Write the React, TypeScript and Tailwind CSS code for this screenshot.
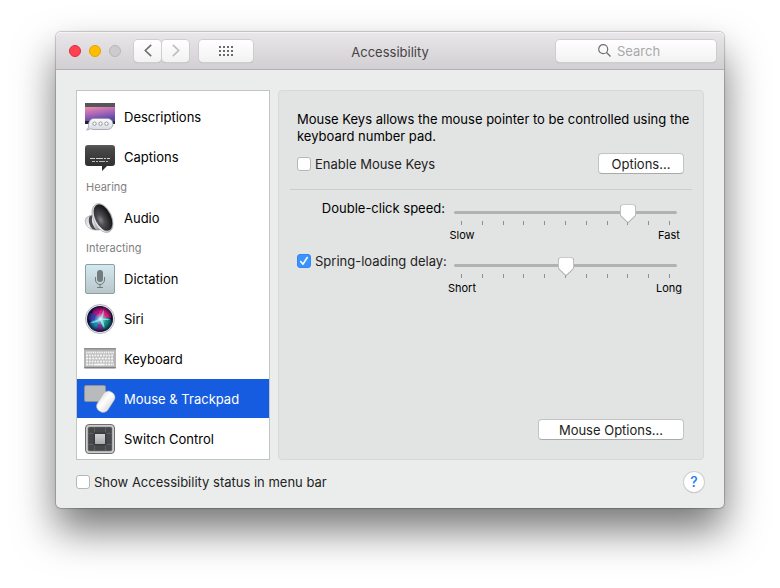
import React, { useState } from 'react';

function DescriptionsIcon() {
  return (
    <svg viewBox="0 0 32 32" className="size-8">
      <defs>
        <linearGradient id="desc-bg" x1="0" y1="0" x2="0.35" y2="1">
          <stop offset="0" stopColor="#f28ea6" />
          <stop offset="0.5" stopColor="#b068b8" />
          <stop offset="1" stopColor="#5a4aa8" />
        </linearGradient>
        <linearGradient id="desc-bubble" x1="0" y1="0" x2="0" y2="1">
          <stop offset="0" stopColor="#fbfbfd" />
          <stop offset="1" stopColor="#d9dae2" />
        </linearGradient>
      </defs>
      <rect x="1" y="2" width="30" height="21" fill="#232327" />
      <rect x="1" y="2" width="30" height="4" fill="#55565a" />
      <rect x="1" y="6" width="30" height="14" fill="url(#desc-bg)" />
      <path
        d="M10 17.500h13.500a5.500 5.500 0 0 1 0 11H10c-1.500 0-2.500-.2-3.500-.8-1 .8-2.500 1.200-4 1.200 1.500-1 2.200-2.300 2-4.300C4.200 21 6.500 17.500 10 17.500z"
        fill="url(#desc-bubble)"
        stroke="#8f90a0"
        strokeWidth="0.7"
      />
      <g fill="#fff" stroke="#8d8e98" strokeWidth="0.9">
        <circle cx="10.500" cy="22.700" r="1.700" />
        <circle cx="16.500" cy="22.700" r="1.700" />
        <circle cx="22.500" cy="22.700" r="1.700" />
      </g>
    </svg>
  );
}

function CaptionsIcon() {
  return (
    <svg viewBox="0 0 32 32" className="size-8">
      <defs>
        <linearGradient id="cap-bg" x1="0" y1="0" x2="0" y2="1">
          <stop offset="0" stopColor="#5a5a5a" />
          <stop offset="0.15" stopColor="#484848" />
          <stop offset="1" stopColor="#282828" />
        </linearGradient>
      </defs>
      <path
        d="M4 4h24a3 3 0 0 1 3 3v15a3 3 0 0 1-3 3h-5l-5 5v-5H4a3 3 0 0 1-3-3V7a3 3 0 0 1 3-3z"
        fill="url(#cap-bg)"
      />
      <path d="M6 17.500h20" stroke="#d0d0d0" strokeDasharray="5 1 7 1 2 1" />
      <path d="M8 20.500h16" stroke="#b8b8b8" strokeDasharray="3 1 2 1 6 1" />
    </svg>
  );
}

function AudioIcon() {
  return (
    <svg viewBox="0 0 32 32" className="size-8">
      <defs>
        <linearGradient id="aud-rim" x1="0" y1="0" x2="1" y2="1">
          <stop offset="0" stopColor="#c4c4c8" />
          <stop offset="0.5" stopColor="#f0f0f2" />
          <stop offset="1" stopColor="#8a8a90" />
        </linearGradient>
        <radialGradient id="aud-cone" cx="0.3" cy="0.55" r="0.6">
          <stop offset="0" stopColor="#85858a" />
          <stop offset="0.35" stopColor="#4c4c50" />
          <stop offset="1" stopColor="#1b1b1e" />
        </radialGradient>
      </defs>
      <path d="M2 16c2-2 5-2.500 8-4l6 16c-4 0-8 .5-11.500-2.500C1.500 23 .5 19 2 16z" fill="url(#aud-rim)" stroke="#88888e" strokeWidth="0.5" />
      <path d="M5.500 14.500c-1.500 4-.5 9 3 12.500l4 1C8.500 24 7 18 8.500 13z" fill="#4a4a50" />
      <ellipse cx="18.500" cy="16" rx="9.200" ry="15.500" transform="rotate(-25 18.500 16)" fill="url(#aud-rim)" stroke="#98989c" strokeWidth="0.5" />
      <ellipse cx="19" cy="15.500" rx="7.900" ry="14.200" transform="rotate(-25 19 15.500)" fill="url(#aud-cone)" />
    </svg>
  );
}

function DictationIcon() {
  return (
    <svg viewBox="0 0 32 32" className="size-8">
      <defs>
        <linearGradient id="dict-bg" x1="0" y1="0" x2="0" y2="1">
          <stop offset="0" stopColor="#d2eaf0" />
          <stop offset="1" stopColor="#b9c5c8" />
        </linearGradient>
      </defs>
      <rect x="1.500" y="1.500" width="29" height="29" rx="1.500" fill="url(#dict-bg)" stroke="#8fa0a5" />
      <rect x="13" y="7" width="6" height="12" rx="3" fill="#727b7e" />
      <path d="M11.500 14v3a4.500 4.500 0 0 0 9 0v-3M16 21.500V24M13 24.500h6" fill="none" stroke="#727b7e" />
    </svg>
  );
}

function SiriIcon() {
  return (
    <svg viewBox="0 0 32 32" className="size-8">
      <defs>
        <radialGradient id="siri-glow">
          <stop offset="0" stopColor="#e8ffff" />
          <stop offset="0.4" stopColor="#a8ecf4" stopOpacity="0.6" />
          <stop offset="1" stopColor="#a8ecf4" stopOpacity="0" />
        </radialGradient>
        <radialGradient id="siri-edge">
          <stop offset="0.6" stopColor="#0e0c30" stopOpacity="0" />
          <stop offset="1" stopColor="#0e0c30" stopOpacity="0.9" />
        </radialGradient>
        <clipPath id="siri-clip">
          <circle cx="16" cy="16" r="12.500" />
        </clipPath>
      </defs>
      <circle cx="16" cy="16" r="14.500" fill="#e9e9ec" stroke="#a6a6aa" strokeWidth="0.8" />
      <circle cx="16" cy="16" r="13" fill="#12103a" />
      <g clipPath="url(#siri-clip)">
        <path d="M16 16C8 13 5 8 13 4c8-2 14 3 14 9z" fill="#b5107f" />
        <path d="M16 16C13 11 16 5 20 4c6 2 8 7 7 11z" fill="#e01a80" />
        <path d="M16 16C10 8 5 9 4 14c0 4 2 5 6 4z" fill="#3c3aa6" />
        <path d="M16 16C11 16 5 18 5 22c2 6 8 6 10 4z" fill="#1a83b0" />
        <path d="M16 16c8-3 12-1 12 5-2 6-7 7-10 5z" fill="#178a80" />
        <path d="M16 16c0 4 2 8 4 11-4 2-7 2-8 0z" fill="#7a3090" />
        <path d="M5 19.500c5-.5 8-2.500 11-4.500 2-3 3-6 3.500-9 .5 4 0 7-1.500 9.500 3 0 6 0 9 1-3 .5-6 .5-8.500.5 1.500 3 2 5 2 8.500-2-3-3.500-5-4.500-8-4 2-7 3-11 2z" fill="#8be4ee" opacity="0.85" />
        <circle cx="16.500" cy="16" r="6.500" fill="url(#siri-glow)" />
        <circle cx="16" cy="16" r="13" fill="url(#siri-edge)" />
      </g>
    </svg>
  );
}

function KeyboardIcon() {
  return (
    <svg viewBox="0 0 32 32" className="size-8">
      <rect x="0" y="5" width="32" height="20" rx="1" fill="#b4b4b4" />
      <rect x="0" y="5" width="32" height="1.500" fill="#8f8f8f" />
      <rect x="0" y="24" width="32" height="1.500" rx="0.700" fill="#808080" />
      <g stroke="#f6f6f6" strokeWidth="2">
        <path d="M2 9.500h28" strokeDasharray="1.500 0.700" />
        <path d="M2 12.500h28" strokeDasharray="2 0.800" />
        <path d="M2 15.500h28" strokeDasharray="2.300 0.800" />
        <path d="M2 18.500h28" strokeDasharray="2 0.800" />
        <path d="M2 21.500h28" strokeDasharray="2 0.600 2 0.600 2 0.600 11 0.600 2 0.600 2 0.600" />
      </g>
    </svg>
  );
}

function MouseIcon() {
  return (
    <svg viewBox="0 0 32 32" className="size-8">
      <defs>
        <linearGradient id="mouse-body" x1="0" y1="0" x2="1" y2="0.300">
          <stop offset="0" stopColor="#e2e2e4" />
          <stop offset="0.5" stopColor="#fff" />
          <stop offset="1" stopColor="#e6e6e8" />
        </linearGradient>
      </defs>
      <rect x="0.500" y="2.500" width="21" height="16" rx="1.500" fill="#b9babb" stroke="#8d9096" />
      <rect x="15.500" y="7.500" width="12.500" height="22.500" rx="5.500" transform="rotate(33 21.750 18.750)" fill="url(#mouse-body)" stroke="#a9adb8" strokeWidth="0.500" />
    </svg>
  );
}

function SwitchIcon() {
  return (
    <svg viewBox="0 0 32 32" className="size-8">
      <defs>
        <linearGradient id="sw-key" x1="0" y1="0" x2="0" y2="1">
          <stop offset="0" stopColor="#d2d2d2" />
          <stop offset="1" stopColor="#a9a9a9" />
        </linearGradient>
      </defs>
      <rect x="1.500" y="1.500" width="29" height="29" rx="3.500" fill="#cdcdcd" stroke="#6d6d6d" />
      <rect x="4" y="4" width="24" height="24" rx="1.500" fill="#47484b" stroke="#77787a" strokeWidth="0.600" />
      <path d="M10.500 4v24M21.500 4v24M4 10.500h24M4 21.500h24" stroke="#66676a" strokeWidth="0.800" />
      <rect x="9.500" y="9.500" width="13" height="13" fill="#3a3b3e" />
      <rect x="11" y="11" width="10" height="10" fill="url(#sw-key)" />
    </svg>
  );
}

const groups = [
  {
    title: '',
    items: [
      { name: 'Descriptions', Icon: DescriptionsIcon },
      { name: 'Captions', Icon: CaptionsIcon },
    ],
  },
  { title: 'Hearing', items: [{ name: 'Audio', Icon: AudioIcon }] },
  {
    title: 'Interacting',
    items: [
      { name: 'Dictation', Icon: DictationIcon },
      { name: 'Siri', Icon: SiriIcon },
      { name: 'Keyboard', Icon: KeyboardIcon },
      { name: 'Mouse & Trackpad', Icon: MouseIcon },
      { name: 'Switch Control', Icon: SwitchIcon },
    ],
  },
];

function TitleBar() {
  return (
    <header className="grid grid-cols-[1fr_auto_1fr] items-center h-[38px] px-2 rounded-t-[5px] border-b border-[#b3b0b3] bg-linear-to-b from-[#e9e7e9] to-[#d2cfd2] shadow-[inset_0_1px_0_#f5f4f5]">
      <div className="flex items-center pl-[5px]">
        <div className="flex gap-2">
          <button aria-label="Close" className="size-3 rounded-full border border-[#e2293d] bg-[#ff4351]" />
          <button aria-label="Minimize" className="size-3 rounded-full border border-[#e5a100] bg-[#ffbd00]" />
          <button aria-label="Zoom" disabled className="size-3 rounded-full border border-[#b8b6b8] bg-[#cdcccd]" />
        </div>
        <div className="flex gap-px ml-[13px]">
          <button aria-label="Back" className="flex items-center justify-center w-[27px] h-[22px] rounded-[4px] bg-linear-to-b from-white to-[#f3f2f3] shadow-[0_0_0_1px_#cfcdcf,0_1px_1px_#a9a7a9]">
            <svg viewBox="0 0 8 13" className="w-2 h-[13px]" fill="none" stroke="#6e6e6e" strokeWidth="1.600">
              <path d="M7.200.8 1.300 6.500l5.900 5.700" />
            </svg>
          </button>
          <button aria-label="Forward" disabled className="flex items-center justify-center w-[27px] h-[22px] rounded-[4px] bg-linear-to-b from-white to-[#f3f2f3] shadow-[0_0_0_1px_#cfcdcf,0_1px_1px_#a9a7a9]">
            <svg viewBox="0 0 8 13" className="w-2 h-[13px]" fill="none" stroke="#bdbdbd" strokeWidth="1.600">
              <path d="m.8.800 5.900 5.700L.8 12.200" />
            </svg>
          </button>
        </div>
        <button aria-label="Show All" className="flex items-center justify-center w-[54px] h-[22px] ml-[10px] rounded-[4px] bg-linear-to-b from-white to-[#f3f2f3] shadow-[0_0_0_1px_#cfcdcf,0_1px_1px_#a9a7a9]">
          <svg viewBox="0 0 14 10" className="w-[14px] h-[10px]" stroke="#6a6a6a" strokeWidth="2">
            <path d="M0 1h14M0 5h14M0 9h14" strokeDasharray="2 2" />
          </svg>
        </button>
      </div>
      <h1 className="text-[13px] leading-4 pt-[2px] text-[#454345]">Accessibility</h1>
      <div className="flex items-center gap-1.5 justify-self-end w-[160px] h-[22px] pl-[42px] rounded-[4px] bg-linear-to-b from-white to-[#f3f2f3] shadow-[0_0_0_1px_#cfcdcf,0_1px_1px_#a9a7a9]">
        <svg viewBox="0 0 13 13" className="size-[13px] shrink-0" fill="none" stroke="#6e6e6e" strokeWidth="1.200">
          <circle cx="5.200" cy="5.200" r="4.500" />
          <path d="m8.500 8.500 4 4" />
        </svg>
        <input type="search" aria-label="Search" placeholder="Search" className="min-w-0 w-full text-[13px] leading-4 bg-transparent outline-none placeholder:text-[#a9a8a9]" />
      </div>
    </header>
  );
}

function Checkbox({ label, defaultChecked }: { label: string; defaultChecked?: boolean }) {
  return (
    <label className="flex items-center gap-1 text-[13px] leading-4 text-[#222] whitespace-nowrap">
      <span className="relative flex">
        <input
          type="checkbox"
          defaultChecked={defaultChecked}
          className="peer appearance-none size-[14px] rounded-[3px] border border-[#b6b6b6] bg-white checked:border-[#2f86f6] checked:bg-[#3b93fd]"
        />
        <svg viewBox="0 0 14 14" className="absolute inset-0 size-[14px] hidden peer-checked:block pointer-events-none" fill="none" stroke="#fff" strokeWidth="1.600" strokeLinecap="round" strokeLinejoin="round">
          <path d="m3.700 7.500 2.300 2.700 4.200-6.700" />
        </svg>
      </span>
      {label}
    </label>
  );
}

function Slider({ name, initial, min, max }: { name: string; initial: number; min: string; max: string }) {
  const [value, setValue] = useState(initial);

  return (
    <div className="flex-1 min-w-0 pt-1 mr-[7px]">
      <div className="relative flex items-center h-[17px]">
        <input
          type="range"
          aria-label={name}
          min={0}
          max={10}
          value={value}
          onChange={(e) => setValue(Number(e.target.value))}
          className="w-full h-[3px] appearance-none rounded-full bg-[#b1b2b2] outline-none [&::-webkit-slider-thumb]:appearance-none [&::-webkit-slider-thumb]:size-4 [&::-webkit-slider-thumb]:opacity-0"
        />
        <div className="absolute left-2 right-2 top-0 pointer-events-none">
          <svg
            viewBox="0 0 18 20"
            className="absolute top-0 w-[18px] h-5 -translate-x-1/2"
            style={{ left: `${value * 10}%` }}
          >
            <path d="M3.500.5h11a2.500 2.500 0 0 1 2.500 2.500v7.500c0 .8-.3 1.400-.8 2L9 19.500l-7.200-7c-.5-.6-.8-1.200-.8-2V3A2.500 2.500 0 0 1 3.500.5z" fill="#b0b0b0" />
            <path d="M4 1h10a2.200 2.200 0 0 1 2.200 2.200v6.800c0 .7-.2 1.200-.6 1.700L9 18l-6.600-6.300c-.4-.5-.6-1-.6-1.700V3.200A2.200 2.200 0 0 1 4 1z" fill="#fff" />
          </svg>
        </div>
      </div>
      <div className="flex justify-between px-[7px]">
        {Array.from({ length: 11 }, (_, i) => (
          <span key={i} className="w-px h-1 bg-[#8f9090]" />
        ))}
      </div>
      <div className="flex justify-between -mx-2 mt-[2px] text-[11px] leading-4 text-center">
        <span className="w-8">{min}</span>
        <span className="w-8">{max}</span>
      </div>
    </div>
  );
}

function Sidebar() {
  const [selected, setSelected] = useState('Mouse & Trackpad');

  return (
    <nav className="w-[194px] shrink-0 pt-1.5 border border-[#c3c4c4] bg-white">
      {groups.map((group) => (
        <div key={group.title}>
          {group.title && (
            <h2 className="h-[21px] pl-[9px] text-[11px] leading-5 text-[#7f7f7f]">{group.title}</h2>
          )}
          {group.items.map(({ name, Icon }) => (
            <button
              key={name}
              onClick={() => setSelected(name)}
              className={
                name === selected
                  ? 'flex items-center gap-2 w-full h-[39px] mb-px pl-[7px] text-[13px] bg-[#165ce0] text-white'
                  : 'flex items-center gap-2 w-full h-[39px] mb-px pl-[7px] text-[13px] text-black'
              }
            >
              <Icon />
              <span className="pt-[2px]">{name}</span>
            </button>
          ))}
        </div>
      ))}
    </nav>
  );
}

function MousePanel() {
  return (
    <section className="flex-1 min-w-0 flex flex-col pt-5 pb-[19px] rounded-[4px] border border-[#d7d9d8] bg-[#e2e4e3]">
      <p className="pl-[18px] pr-3 text-[13px] leading-[17px]">
        Mouse Keys allows the mouse pointer to be controlled using the keyboard number pad.
      </p>
      <div className="flex items-center justify-between mt-2 pl-[18px] pr-[19px]">
        <Checkbox label="Enable Mouse Keys" />
        <button className="w-[86px] h-[21px] rounded-[4px] border border-[#c2c3c3] border-b-[#a9aaaa] bg-white text-[13px] leading-4 text-[#222]">
          Options...
        </button>
      </div>
      <hr className="mx-[11px] mt-[15px] border-[#cccece]" />
      <div className="flex flex-col gap-[10px] mt-[10px] pl-[18px] pr-[19px]">
        <div className="flex gap-[9px]">
          <div className="w-[148px] text-right text-[13px] leading-4">Double-click speed:</div>
          <Slider name="Double-click speed" initial={8} min="Slow" max="Fast" />
        </div>
        <div className="flex gap-[9px]">
          <div className="w-[148px]">
            <Checkbox label="Spring-loading delay:" defaultChecked />
          </div>
          <Slider name="Spring-loading delay" initial={5} min="Short" max="Long" />
        </div>
      </div>
      <button className="self-end w-[146px] h-[21px] mt-auto mr-[19px] rounded-[4px] border border-[#c2c3c3] border-b-[#a9aaaa] bg-white text-[13px] leading-4 text-[#222]">
        Mouse Options...
      </button>
    </section>
  );
}

export default function App() {
  return (
    <div className="px-14 pt-8 pb-20 bg-white text-black font-['Inter','Liberation_Sans',sans-serif]">
      <main className="rounded-[5px] bg-[#ebedec] shadow-[0_0_1px_1px_rgba(0,0,0,0.2),0_22px_40px_rgba(0,0,0,0.54)]">
        <TitleBar />
        <div className="px-5 pt-5 pb-4">
          <div className="flex gap-2">
            <Sidebar />
            <MousePanel />
          </div>
          <footer className="flex items-center justify-between mt-3">
            <Checkbox label="Show Accessibility status in menu bar" />
            <button aria-label="Help" className="size-5 rounded-full bg-white text-[14px] leading-5 font-medium text-[#1a7bf8] shadow-[0_0_0_1px_#cfd0d0,0_1px_1px_#9a9b9b]">
              ?
            </button>
          </footer>
        </div>
      </main>
    </div>
  );
}
